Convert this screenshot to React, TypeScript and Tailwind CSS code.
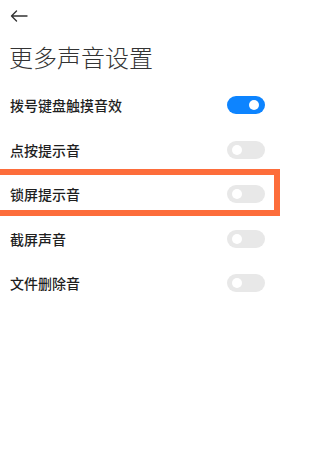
const rows = [
  { label: "拨号键盘触摸音效", on: true },
  { label: "点按提示音", on: false },
  { label: "锁屏提示音", on: false },
  { label: "截屏声音", on: false },
  { label: "文件删除音", on: false },
];

function Toggle({ on }: { on: boolean }) {
  return (
    <div
      className={`relative w-[38px] h-[18px] rounded-full ${on ? "bg-[#0d84ff]" : "bg-[#e8e8e8]"}`}
    >
      <span
        className={`absolute top-[4px] w-[10px] h-[10px] rounded-full bg-white ${on ? "right-[6px]" : "left-[5px]"}`}
      />
    </div>
  );
}

export default function App() {
  return (
    <div className="relative w-[299px] h-[462px] overflow-hidden bg-white font-['Noto_Sans_CJK_SC',sans-serif]">
      <div className="pt-[10px] pl-[10px] h-[45px]">
        <svg width="18" height="12" viewBox="0 0 18 12" fill="none" stroke="#333" strokeWidth="1.4" strokeLinecap="round" strokeLinejoin="round">
          <path d="M17 6H1.5M6.5 1L1.5 6l5 5" />
        </svg>
      </div>
      <h1 className="pl-[9px] h-[24px] text-[24px] leading-[24px] font-light text-[#333] tracking-[0px]">
        更多声音设置
      </h1>
      <div className="mt-[14px]">
        {rows.map((r) => (
          <div key={r.label} className="flex items-center justify-between h-[44.5px] pl-[10px] pr-[34px]">
            <span className="text-[14px] leading-none font-medium text-[#1f1f1f]">{r.label}</span>
            <Toggle on={r.on} />
          </div>
        ))}
      </div>
      <div className="absolute left-[-10px] top-[169px] w-[290px] h-[47px] border-[6px] border-[#fd6d3b]" />
    </div>
  );
}
